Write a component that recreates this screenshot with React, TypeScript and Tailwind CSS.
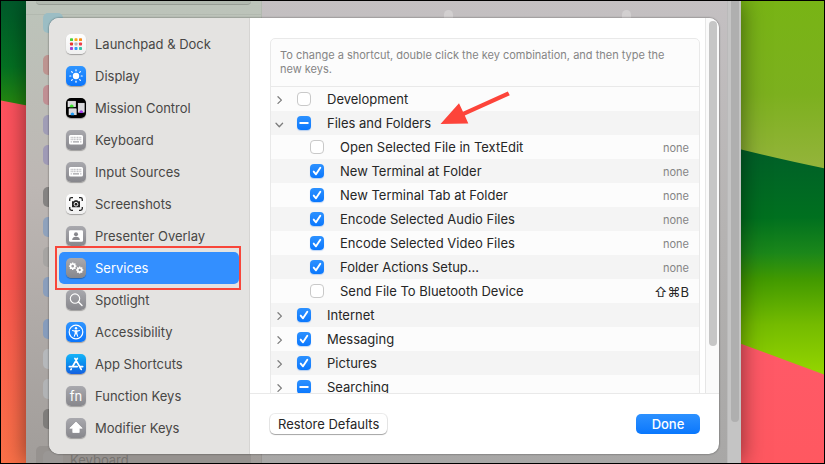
import type { ReactNode } from "react";

const GRAY = "bg-linear-to-b from-[#a9a9ae] to-[#87878c]";
const BLUE = "bg-linear-to-b from-[#2f95ff] to-[#0a75fb]";
const WHITE = "bg-linear-to-b from-[#ffffff] to-[#f0f0f0]";

const DOT_COLORS = ["#4cd137", "#f7a81b", "#f58b1a", "#e8372c", "#b4b4b8", "#ee3d4a", "#a044d8", "#2e9df5", "#35c5a4"];

function LaunchpadIcon() {
  return (
    <svg viewBox="0 0 20 20" className="size-5" aria-hidden="true">
      {DOT_COLORS.map((color, i) => (
        <rect key={color} x={4 + (i % 3) * 4.5} y={4.2 + Math.floor(i / 3) * 4.4} width="3" height="2.9" rx="0.7" fill={color} />
      ))}
    </svg>
  );
}

function SunIcon() {
  return (
    <svg viewBox="0 0 20 20" className="size-5" aria-hidden="true">
      <circle cx="10" cy="10" r="3.2" fill="#fff" />
      <g stroke="#fff" strokeWidth="1.2" strokeLinecap="round">
        {[0, 45, 90, 135, 180, 225, 270, 315].map((a) => (
          <path key={a} d="M10 4.800V3.800" transform={`rotate(${a} 10 10)`} />
        ))}
      </g>
    </svg>
  );
}

function MissionControlIcon() {
  return (
    <svg viewBox="0 0 20 20" className="size-5" aria-hidden="true">
      <g fill="#d9d9dc" stroke="#fff" strokeWidth="0.5">
        <rect x="2" y="3.2" width="7.6" height="5.6" />
        <rect x="3" y="10.8" width="7.2" height="6" />
        <rect x="12.2" y="5.2" width="6" height="9" />
      </g>
      <path d="M4 9.3a1.9 1.9 0 1 1 3.400 0z" fill="#3ee52f" />
      <path d="M4.900 17.300a1.800 1.800 0 1 1 3 0z" fill="#1f9cf5" />
      <path d="M13.700 15a1.800 1.800 0 1 1 3 0z" fill="#a33bea" />
    </svg>
  );
}

function KeyboardIcon() {
  return (
    <svg viewBox="0 0 20 20" className="size-5" aria-hidden="true">
      <rect x="3" y="5" width="14" height="9.600" rx="1.500" fill="#fff" />
      <g stroke="#c2c2c6" strokeWidth="1.500" strokeDasharray="1.100 0.500">
        <path d="M4.600 7.400h11M4.600 9.600h11" />
      </g>
      <path d="M4.600 11.900h1.500M14 11.900h1.500" stroke="#c2c2c6" strokeWidth="1.200" />
      <path d="M7 11.900h6" stroke="#a0a0a5" strokeWidth="1.200" />
    </svg>
  );
}

function ScreenshotIcon() {
  return (
    <svg viewBox="0 0 20 20" className="size-5" aria-hidden="true" fill="none" stroke="#222" strokeWidth="1.300">
      <path d="M3.700 7V5.500a1.800 1.800 0 0 1 1.800-1.800H7M13 3.700h1.500a1.800 1.800 0 0 1 1.800 1.800V7M16.300 13v1.500a1.800 1.800 0 0 1-1.800 1.800H13M7 16.300H5.500a1.800 1.800 0 0 1-1.800-1.800V13" />
      <path d="M6 7.300h1.900l.8-1.100h2.600l.8 1.100H14v6H6z" fill="#222" stroke="none" />
      <circle cx="10" cy="10.200" r="1.900" stroke="#fff" strokeWidth="0.900" />
    </svg>
  );
}

function PresenterIcon() {
  return (
    <svg viewBox="0 0 20 20" className="size-5" aria-hidden="true">
      <rect x="3" y="4.200" width="14" height="11.600" rx="1.300" fill="#fff" />
      <circle cx="10" cy="8.200" r="2" fill="#88888d" />
      <path d="M6.200 14c0-2.200 1.500-3.200 3.800-3.200s3.800 1 3.800 3.200z" fill="#88888d" />
    </svg>
  );
}

const TEETH = [0, 45, 90, 135, 180, 225, 270, 315];

function Gear({ cx, cy, r }: { cx: number; cy: number; r: number }) {
  return (
    <g stroke="#fff">
      <circle cx={cx} cy={cy} r={r} fill="none" strokeWidth="1.700" />
      {TEETH.map((a) => (
        <path key={a} d={`M${cx} ${cy - r}v-1.600`} strokeWidth="1.300" transform={`rotate(${a} ${cx} ${cy})`} />
      ))}
    </g>
  );
}

function ServicesIcon() {
  return (
    <svg viewBox="0 0 20 20" className="size-5" aria-hidden="true">
      <Gear cx={6.7} cy={8.2} r={2.2} />
      <Gear cx={13.7} cy={12} r={2} />
    </svg>
  );
}

function SpotlightIcon() {
  return (
    <svg viewBox="0 0 20 20" className="size-5" aria-hidden="true" fill="none" stroke="#fff" strokeLinecap="round">
      <circle cx="9" cy="8.600" r="4.700" strokeWidth="1.100" />
      <path d="M12.500 12.100l3.500 3.500" strokeWidth="1.400" />
    </svg>
  );
}

function AccessibilityIcon() {
  return (
    <svg viewBox="0 0 20 20" className="size-5" aria-hidden="true" fill="none" stroke="#fff" strokeLinecap="round">
      <circle cx="10" cy="10" r="6.800" strokeWidth="1.200" />
      <circle cx="10" cy="6.300" r="1.200" fill="#fff" stroke="none" />
      <path d="M6.500 8.500l2.500.6h2l2.500-.6" strokeWidth="1.100" />
      <path d="M9.200 9v2.600L8.300 14.300M10.800 9v2.600l.9 2.700" strokeWidth="1.100" />
      <path d="M10 9v2.500" strokeWidth="1.800" />
    </svg>
  );
}

function AppStoreIcon() {
  return (
    <svg viewBox="0 0 20 20" className="size-5" aria-hidden="true" fill="none" stroke="#fff" strokeWidth="1.700" strokeLinecap="round">
      <path d="M11.300 4.400L6.700 12.300M8.900 4.400l6.300 11M3.300 12.600h7.900M14.200 12.600h2.500M5.300 14.900l-.4.700" />
    </svg>
  );
}

function FnIcon() {
  return <span className="text-[13px] leading-5 text-white">fn</span>;
}

function ShiftIcon() {
  return (
    <svg viewBox="0 0 20 20" className="size-5" aria-hidden="true">
      <path d="M10 4l6.200 6.200h-3v4.300H6.800v-4.300h-3z" fill="#fff" stroke="#fff" strokeWidth="0.800" strokeLinejoin="round" />
    </svg>
  );
}

type Category = { name: string; tile: string; icon: ReactNode };

const CATEGORIES: Category[] = [
  { name: "Launchpad & Dock", tile: WHITE, icon: <LaunchpadIcon /> },
  { name: "Display", tile: BLUE, icon: <SunIcon /> },
  { name: "Mission Control", tile: "bg-black", icon: <MissionControlIcon /> },
  { name: "Keyboard", tile: GRAY, icon: <KeyboardIcon /> },
  { name: "Input Sources", tile: GRAY, icon: <KeyboardIcon /> },
  { name: "Screenshots", tile: WHITE, icon: <ScreenshotIcon /> },
  { name: "Presenter Overlay", tile: GRAY, icon: <PresenterIcon /> },
  { name: "Services", tile: GRAY, icon: <ServicesIcon /> },
  { name: "Spotlight", tile: GRAY, icon: <SpotlightIcon /> },
  { name: "Accessibility", tile: BLUE, icon: <AccessibilityIcon /> },
  { name: "App Shortcuts", tile: "bg-linear-to-b from-[#17b4f8] to-[#1560e0]", icon: <AppStoreIcon /> },
  { name: "Function Keys", tile: GRAY, icon: <FnIcon /> },
  { name: "Modifier Keys", tile: GRAY, icon: <ShiftIcon /> },
];

function Sidebar() {
  return (
    <nav aria-label="Shortcut categories" className="w-[201px] shrink-0 border-r border-[#d6d5d3] bg-[#e4e3e1] px-[10px] py-[10px]">
      <ul>
        {CATEGORIES.map(({ name, tile, icon }) => {
          const selected = name === "Services";
          return (
            <li key={name} className="relative">
              <button
                type="button"
                aria-current={selected ? "true" : undefined}
                className={`flex h-8 w-full items-center gap-[9px] rounded-[5px] pl-[7px] text-left text-[13px] ${
                  selected ? "bg-[#338fff] text-white" : "text-[#484745]"
                }`}
              >
                <span className={`flex size-5 items-center justify-center rounded-[5px] shadow-[0_1px_1px_rgba(0,0,0,0.3)] ${tile}`}>{icon}</span>
                <span className="pt-0.5">{name}</span>
              </button>
              {selected && <span className="pointer-events-none absolute -inset-y-1.5 -left-1 -right-0.5 z-10 border-2 border-[#f8463a]" />}
            </li>
          );
        })}
      </ul>
    </nav>
  );
}

type CheckState = "on" | "off" | "mixed";
type Row = { label: string; state: CheckState; child?: boolean; open?: boolean; keys?: string };

const ROWS: Row[] = [
  { label: "Development", state: "off" },
  { label: "Files and Folders", state: "mixed", open: true },
  { label: "Open Selected File in TextEdit", state: "off", child: true, keys: "none" },
  { label: "New Terminal at Folder", state: "on", child: true, keys: "none" },
  { label: "New Terminal Tab at Folder", state: "on", child: true, keys: "none" },
  { label: "Encode Selected Audio Files", state: "on", child: true, keys: "none" },
  { label: "Encode Selected Video Files", state: "on", child: true, keys: "none" },
  { label: "Folder Actions Setup…", state: "on", child: true, keys: "none" },
  { label: "Send File To Bluetooth Device", state: "off", child: true, keys: "⇧⌘B" },
  { label: "Internet", state: "on" },
  { label: "Messaging", state: "on" },
  { label: "Pictures", state: "on" },
  { label: "Searching", state: "mixed" },
];

function Checkbox({ id, state }: { id: string; state: CheckState }) {
  return (
    <span className="grid size-[14px] shrink-0">
      <input
        id={id}
        type="checkbox"
        defaultChecked={state === "on"}
        ref={(el) => {
          if (el) el.indeterminate = state === "mixed";
        }}
        className={`col-start-1 row-start-1 size-[14px] appearance-none rounded-[4px] ${
          state === "off"
            ? "border border-[#c9c9c9] bg-white"
            : "bg-linear-to-b from-[#2c91ff] to-[#0877fd] shadow-[0_1px_1px_rgba(0,100,230,0.25)]"
        }`}
      />
      {state !== "off" && (
        <svg viewBox="0 0 14 14" className="pointer-events-none col-start-1 row-start-1 size-[14px]" fill="none" stroke="#fff" strokeLinecap="round" strokeLinejoin="round" aria-hidden="true">
          {state === "on" ? <path d="M3.700 7.600l2.300 2.700 4.300-6.600" strokeWidth="1.900" /> : <path d="M3.200 7h7.600" strokeWidth="1.900" />}
        </svg>
      )}
    </span>
  );
}

function ShortcutTable() {
  return (
    <table className="w-full border-collapse text-[13px]">
      <tbody>
        {ROWS.map((row, i) => {
          const id = `shortcut-${i}`;
          return (
            <tr key={row.label} className={i % 2 ? "bg-[#f4f4f4]" : "bg-[#fcfcfc]"}>
              <td className="p-0">
                <div className={`flex h-6 items-center ${row.child ? "pl-[39px]" : ""}`}>
                  {!row.child && (
                    <button type="button" aria-label={`Toggle ${row.label}`} aria-expanded={!!row.open} className="mr-2 flex h-6 w-[18px] items-center justify-center">
                      <svg viewBox="0 0 10 10" className="size-[10px]" fill="none" stroke="#7d7d7d" strokeWidth="1.300" strokeLinecap="round" strokeLinejoin="round">
                        <path d={row.open ? "M1 5.200l3.300 3.500L7.600 5.200" : "M3 2.800l3.400 3.300L3 9.400"} />
                      </svg>
                    </button>
                  )}
                  <Checkbox id={id} state={row.state} />
                  <label htmlFor={id} className="pl-4 pt-0.5 text-[#262626]">
                    {row.label}
                  </label>
                </div>
              </td>
              <td className={`p-0 pr-[10px] pt-0.5 text-right leading-5 ${row.keys === "none" ? "text-[11px] text-[#858585]" : "text-[13px] text-[#262626]"}`}>
                {row.keys}
              </td>
            </tr>
          );
        })}
      </tbody>
    </table>
  );
}

const BACKDROP_GROUPS: string[][] = [
  ["bg-[#9bbdc4]"],
  ["bg-[#bd9490]", "bg-[#c08f93]", "bg-[#a09db6]", "bg-[#9f9ab6]"],
  ["bg-[#858382]", "bg-[#8fa2bc]", "bg-[#a6a4a2]", "bg-[#8a9ebc]"],
  ["bg-[#869cbc]", "bg-[#b5b8bb]", "bg-[#b1b3b5]", "bg-[#7f7d7b]"],
];

/* The dimmed System Settings window behind the sheet. */
function BackdropWindow() {
  return (
    <div className="absolute inset-y-0 left-[25px] right-[83px] flex overflow-hidden bg-linear-to-b from-[#c4c0c2] via-[#b5b3b2] to-[#a8a7a6] shadow-[0_0_22px_rgba(0,0,0,0.5)]">
      <div className="w-[236px] shrink-0 border-r border-black/5 bg-linear-to-b from-[#bcc4ba] via-[#bdb7b4] via-40% to-[#a19d9a] px-[10px]">
        <div className="-mx-[10px] h-[14px] border-b border-black/5 px-[10px]">
          <div className="h-1 rounded-b-[5px] border-b border-black/15 bg-black/5" />
        </div>
        <div className="-mt-[7px] flex flex-col gap-3">
          {BACKDROP_GROUPS.map((group, g) => (
            <ul key={g}>
              {group.map((color) => (
                <li key={color} className="flex h-[30px] items-center pl-[7px]">
                  <span className={`size-5 rounded-[5px] ${color}`} />
                </li>
              ))}
            </ul>
          ))}
          <div className="flex h-[30px] shrink-0 items-center gap-[7px] rounded-[5px] bg-[#96928f] pl-[7px] text-[13px] text-[#777471]">
            <span className="size-5 rounded-[5px] bg-[#9a9795]" />
            Keyboard
          </div>
        </div>
      </div>
      <div className="flex flex-1 gap-[169px] pl-[182px] pt-[9px]">
        <span className="h-5 w-[9px] rounded-full bg-white/25" />
        <span className="h-5 w-[9px] rounded-full bg-white/25" />
      </div>
      <div className="flex w-[14px] shrink-0 justify-center border-l border-black/5 bg-[#c4c4c4]">
        <div className="mb-[41px] w-2 rounded-b-full bg-[#afafaf]" />
      </div>
    </div>
  );
}

function Wallpaper() {
  return (
    <svg viewBox="0 0 825 464" preserveAspectRatio="none" className="absolute inset-0 size-full" aria-hidden="true">
      <defs>
        <linearGradient id="leftGreen" x1="0" y1="0" x2="0" y2="1">
          <stop offset="0" stopColor="#005a2b" />
          <stop offset="0.600" stopColor="#047122" />
          <stop offset="1" stopColor="#2b8c0c" />
        </linearGradient>
        <linearGradient id="leftRed" x1="0" y1="0" x2="0" y2="1">
          <stop offset="0" stopColor="#ff525f" />
          <stop offset="0.500" stopColor="#ff5850" />
          <stop offset="1" stopColor="#fb7148" />
        </linearGradient>
        <linearGradient id="rightLime" x1="0" y1="0" x2="0" y2="1">
          <stop offset="0" stopColor="#78b415" />
          <stop offset="0.550" stopColor="#7cb01e" />
          <stop offset="1" stopColor="#95b43c" />
        </linearGradient>
        <linearGradient id="rightGreen" gradientUnits="userSpaceOnUse" x1="0" y1="150" x2="0" y2="374">
          <stop offset="0" stopColor="#005f28" />
          <stop offset="0.300" stopColor="#00701f" />
          <stop offset="0.460" stopColor="#1b871a" />
          <stop offset="0.580" stopColor="#429a00" />
          <stop offset="0.780" stopColor="#74bb00" />
          <stop offset="1" stopColor="#94d500" />
        </linearGradient>
        <linearGradient id="rightRed" x1="0" y1="0" x2="0" y2="1">
          <stop offset="0" stopColor="#ff5a70" />
          <stop offset="1" stopColor="#ff5860" />
        </linearGradient>
      </defs>
      <rect width="400" height="110" fill="url(#leftGreen)" />
      <path d="M0 100L26 105L400 180V464H0z" fill="url(#leftRed)" />
      <rect x="400" width="425" height="170" fill="url(#rightLime)" />
      <path d="M400 70L741 149Q790 161 825 168V380H400z" fill="url(#rightGreen)" />
      <path d="M400 220L741 344L825 375V464H400z" fill="url(#rightRed)" />
    </svg>
  );
}

export default function App() {
  return (
    <div className="relative h-screen min-h-[464px] overflow-hidden border border-black font-['Inter','DejaVu_Sans',sans-serif]">
      <Wallpaper />
      <BackdropWindow />
      <div
        role="dialog"
        aria-label="Keyboard shortcuts"
        className="absolute bottom-[9px] left-12 right-[105px] top-[17px] flex overflow-hidden rounded-[10px] bg-white shadow-[0_0_2px_rgba(0,0,0,0.6)]"
      >
        <Sidebar />
        <main className="flex min-w-0 flex-1 flex-col">
          <div className="flex min-h-0 flex-1 overflow-hidden">
            <section className="min-w-0 flex-1 pl-5 pr-[5px] pt-5">
              <div className="overflow-hidden rounded-t-[5px] border border-[#e9e9e9] bg-[#fcfcfc]">
                <p className="border-b border-[#e9e9e9] pb-[10px] pl-[9px] pr-6 pt-[9px] text-[11px] leading-[14px] text-[#858585]">
                  To change a shortcut, double click the key combination, and then type the new keys.
                </p>
                <ShortcutTable />
              </div>
            </section>
            <div className="flex w-[14px] shrink-0 justify-center border-l border-[#e6e6e6] bg-[#fafafa] pt-[3px]">
              <div className="mb-[47px] w-2 rounded-full bg-[#c6c6c6]" />
            </div>
          </div>
          <footer className="flex h-[61px] shrink-0 items-center justify-between border-t border-[#e9e9e9] pl-5 pr-[19px] text-[13px]">
            <button type="button" className="h-5 rounded-[5px] bg-white px-2 leading-5 text-[#262626] shadow-[0_0_0_1px_rgba(0,0,0,0.08),0_1px_1px_rgba(0,0,0,0.3)]">
              Restore Defaults
            </button>
            <button type="button" className="h-5 w-16 rounded-[5px] bg-linear-to-b from-[#2c91ff] to-[#0877fd] font-medium leading-5 text-white">
              Done
            </button>
          </footer>
        </main>
      </div>
      <svg viewBox="0 0 70 34" className="pointer-events-none absolute left-[439px] top-[90px] h-[34px] w-[70px]" fill="#fd443a" aria-hidden="true">
        <path d="M0.500 33L19 12.300L23 20.800L67.800 0.500L69.800 4.300L24.800 24.600L28.300 32.500z" />
      </svg>
    </div>
  );
}
